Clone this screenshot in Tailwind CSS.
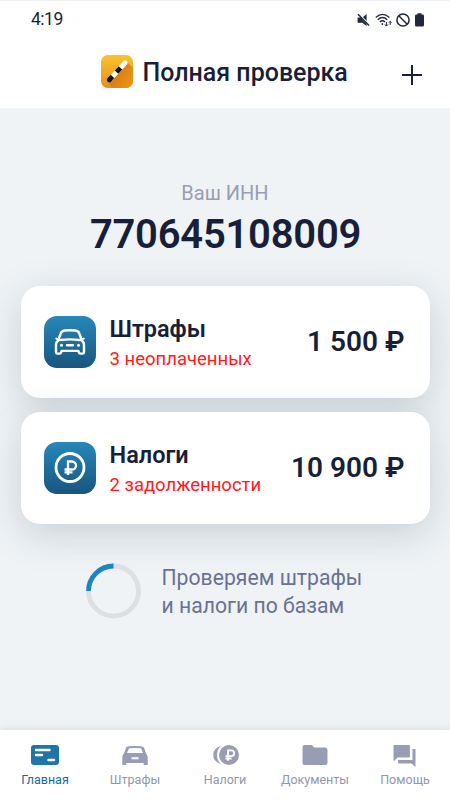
<!DOCTYPE html>
<html lang="ru">
<head>
<meta charset="utf-8">
<meta name="viewport" content="width=device-width, initial-scale=1">
<title>Полная проверка</title>
<script src="https://cdn.jsdelivr.net/npm/@tailwindcss/browser@4"></script>
</head>
<body class="bg-[#eff3f6]">
<div class="w-[450px] h-[800px] overflow-hidden flex flex-col bg-[#eff3f6] text-[#191f38] font-['Roboto','Noto_Sans',sans-serif] whitespace-nowrap">
  <header class="h-[108px] shrink-0 bg-white border-t border-[#eff2f5] flex flex-col">
    <div class="h-[37px] pl-[31px] pr-[26px] flex items-center justify-between">
      <span class="text-[17.500px] leading-5 tracking-[-0.5px] pb-[2px]">4:19</span>
      <div class="flex items-center gap-[5px]">
        <svg class="w-[13px] h-[14px]" viewBox="0 0 13 14" fill="#22273d"><path d="M.6 4.500H5v5.300H.6zM3 4.500l6.600 6.600v2L5.300 9.800zM5.800 4.300 9.600 1v7z"/><path d="M2 .6 12.600 11.500" stroke="#fff" stroke-width="1"/><path d="M1 1.200 12 12.600" stroke="#22273d" stroke-width="1.500"/></svg>
        <svg class="w-[17px] h-[14px]" viewBox="0 0 17 14" fill="none" stroke="#22273d" stroke-width="1.300"><path d="M.8 4.400Q7.500-1.600 14.400 4.400M2.800 6.700Q7.500 2.400 12.300 6.700M4.900 9Q7.500 6.600 10 9"/><circle cx="7.400" cy="11" r=".9" fill="#22273d" stroke="none"/><path d="M11.400 9v4m-1.600-1.600 1.600 1.700 1.600-1.700M15.200 12V8.300m-1.400 1.400 1.400-1.500 1.400 1.500" stroke-width="1"/></svg>
        <svg class="w-[14px] h-[14px] -ml-[1px]" viewBox="0 0 14 14" fill="none" stroke="#22273d" stroke-width="1.500"><circle cx="7" cy="7" r="6.100"/><path d="m2.800 2.800 8.400 8.400"/></svg>
        <svg class="w-[9px] h-[14px]" viewBox="0 0 9 14" fill="#22273d"><path d="M2.500 1.600V.3h4v1.300h1.100Q9 1.600 9 3v9q0 1.500-1.400 1.500H1.400Q0 13.500 0 12V3q0-1.400 1.400-1.400z"/></svg>
      </div>
    </div>
    <div class="h-[70px] pl-[101px] pr-[28px] flex items-center">
      <svg class="w-8 h-[33px] shrink-0 -mt-[3px]" viewBox="0 0 32 33">
        <defs>
          <linearGradient id="logo" x1="0" y1="0" x2="0" y2="1"><stop stop-color="#f8c331"/><stop offset="1" stop-color="#ea8f14"/></linearGradient>
          <linearGradient id="shade" x1="0" y1="0.300" x2="1" y2="0.800"><stop stop-color="#d2700a"/><stop offset="1" stop-color="#ec9519"/></linearGradient>
          <clipPath id="logoClip"><rect width="32" height="33" rx="7"/></clipPath>
        </defs>
        <g clip-path="url(#logoClip)"><rect width="32" height="33" fill="url(#logo)"/><path d="m6 26 20-19 6 6v20H12z" fill="url(#shade)"/></g>
        <path d="M8.200 25 24.200 7.800" stroke="#fff" stroke-width="4.800" stroke-linecap="round"/>
        <path d="M8.200 25l.6-.65" stroke="#11151b" stroke-width="4.800" stroke-linecap="round"/>
        <path d="M8.200 25l3.300-3.550M15.500 17.150l4-4.300" stroke="#11151b" stroke-width="4.800"/>
      </svg>
      <h1 class="ml-[9.500px] text-[25px] leading-7 font-medium">Полная проверка</h1>
      <svg class="ml-auto mt-[4px] w-5 h-5" viewBox="0 0 20 20" stroke="#191f38" stroke-width="2"><path d="M0 10h20M10 0v20"/></svg>
    </div>
  </header>

  <main class="grow flex flex-col items-center px-[21px] pt-[73px]">
    <p class="text-[20px] leading-6 text-[#9a9eaf]">Ваш ИНН</p>
    <p class="mt-[6px] pl-[1px] text-[40px] leading-[48px] font-semibold tracking-[-0.25px]">770645108009</p>

    <section class="mt-[27px] w-[409px] flex flex-col gap-[14px]">
      <div class="h-[112px] rounded-[19px] bg-white shadow-[0_10px_38px_rgba(70,80,95,0.22)] pl-[23px] pr-[25px] flex items-center">
        <div class="w-[52px] h-[52px] rounded-[13px] bg-linear-to-b from-[#2788ba] to-[#17567f] flex items-center justify-center">
          <svg class="w-8 h-7" viewBox="0 0 32 28" fill="none" stroke="#fff" stroke-width="2.400" stroke-linejoin="round" stroke-linecap="round"><path d="M4.300 12 6.700 5.500Q7.600 2.800 10.400 2.500q5.600-.6 11.200 0 2.800.3 3.700 3l2.400 6.500"/><path d="M2.200 10.400l1.500 1M29.800 10.400l-1.500 1" stroke-width="1.800"/><path d="M6.800 12q9.200-1.200 18.400 0M4.700 12.300Q2 13.800 2 16.800v7q0 1.800 1.500 1.800h1.900q1.500 0 1.800-1.300l.4-1.400h16.800l.4 1.400q.3 1.300 1.800 1.300h1.900q1.500 0 1.500-1.800v-7q0-3-2.700-4.500M13 17.300h6"/><g fill="#fff" stroke="none"><circle cx="7.500" cy="17.300" r="1.500"/><circle cx="24.500" cy="17.300" r="1.500"/></g></svg>
        </div>
        <div class="ml-[14px] pt-[4px]">
          <h2 class="text-[23.500px] leading-[30px] font-semibold">Штрафы</h2>
          <p class="text-[18.500px] leading-[30px] text-[#ff1a1c]">3 неоплаченных</p>
        </div>
        <span class="ml-auto text-[28px] leading-9 font-semibold">1 500 ₽</span>
      </div>
      <div class="h-[112px] rounded-[19px] bg-white shadow-[0_10px_38px_rgba(70,80,95,0.22)] pl-[23px] pr-[25px] flex items-center">
        <div class="w-[52px] h-[52px] rounded-[13px] bg-linear-to-b from-[#2788ba] to-[#17567f] flex items-center justify-center">
          <svg class="w-8 h-8" viewBox="0 0 32 32" fill="none" stroke="#fff"><circle cx="16" cy="15.500" r="14" stroke-width="2.800"/><path d="M14 23V9.500h4a4 4 0 0 1 0 8H10.500M10.500 20.300h8" stroke-width="2.300"/></svg>
        </div>
        <div class="ml-[14px] pt-[4px]">
          <h2 class="text-[23.500px] leading-[30px] font-semibold">Налоги</h2>
          <p class="text-[18.500px] leading-[30px] text-[#ff1a1c]">2 задолженности</p>
        </div>
        <span class="ml-auto text-[28px] leading-9 font-semibold">10 900 ₽</span>
      </div>
    </section>

    <div class="mt-[38px] w-[278px] flex items-center gap-[20.500px]">
      <svg class="w-[55px] h-[56px] shrink-0" viewBox="0 0 55 56" fill="none" stroke-width="4.800"><circle cx="27.500" cy="28" r="25" stroke="#dce0e3"/><path d="M2.500 28a25 25 0 0 1 25-25" stroke="#1c86c0"/></svg>
      <p class="pt-[2px] text-[21.200px] leading-[27.500px] text-[#6a7192]">Проверяем штрафы<br>и налоги по базам</p>
    </div>
  </main>

  <nav class="h-[70px] shrink-0 bg-white shadow-[0_0_8px_rgba(70,80,95,0.15)] grid grid-cols-5 text-[12.500px] leading-4 text-[#9296ae]">
    <a class="flex flex-col items-center text-[#19699f]">
      <svg class="mt-[13px] w-7 h-6" viewBox="0 0 28 24"><rect y="2" width="28" height="20" rx="3" fill="#2075a8"/><path d="M5 7h13.500M5 12h6M17.500 17h5.500" stroke="#fff" stroke-width="2.400" stroke-linecap="round"/></svg>
      <span class="mt-[5px]">Главная</span>
    </a>
    <a class="flex flex-col items-center">
      <svg class="mt-[13px] w-7 h-6" viewBox="0 0 28 24" fill="#999db3" fill-rule="evenodd"><path d="M5 4.700Q5.600 3.400 8 3.200q6-.6 12 0 2.400.2 3 1.500L25 10.500q1.700 1.500 1.700 3.500v8h-4v-2H5.300v2h-4v-8q0-2 1.700-3.500zM8 5.300 6 10h16L20 5.300Q14 4.600 8 5.300zM10.500 14.300v2h7v-2z"/></svg>
      <span class="mt-[5px]">Штрафы</span>
    </a>
    <a class="flex flex-col items-center">
      <svg class="mt-[13px] w-7 h-6" viewBox="0 0 28 24" fill="none"><circle cx="18" cy="12" r="10" fill="#999db3"/><path d="M10.200 2.600Q2.200 5.500 2.200 12t8 9.400Q6 17.500 6 12t4.200-9.400z" fill="#999db3"/><path d="M17 17.800V7.300h3.200a2.900 2.900 0 0 1 0 5.800h-5.700M14.500 15.500h6" stroke="#fff" stroke-width="1.800"/></svg>
      <span class="mt-[5px]">Налоги</span>
    </a>
    <a class="flex flex-col items-center">
      <svg class="mt-[13px] w-7 h-6" viewBox="0 0 28 24" fill="#999db3"><path d="M3.500 2h7.300l2.500 2.500h11Q26.500 4.500 26.500 7v12.500Q26.500 22 24 22H4Q1.500 22 1.500 19.500V4.200Q1.500 2 3.500 2z"/></svg>
      <span class="mt-[5px]">Документы</span>
    </a>
    <a class="flex flex-col items-center">
      <svg class="mt-[13px] w-7 h-6" viewBox="0 0 28 24" fill="#999db3"><path d="M3 2h14.900q1 0 1 1v10.500q0 1-1 1H6.500l-4 4V2.500q0-.5.5-.5zM21.500 6h3v18l-4-3.500H8q-1 0-1-1V17h14.500z"/></svg>
      <span class="mt-[5px]">Помощь</span>
    </a>
  </nav>
</div>
</body>
</html>
